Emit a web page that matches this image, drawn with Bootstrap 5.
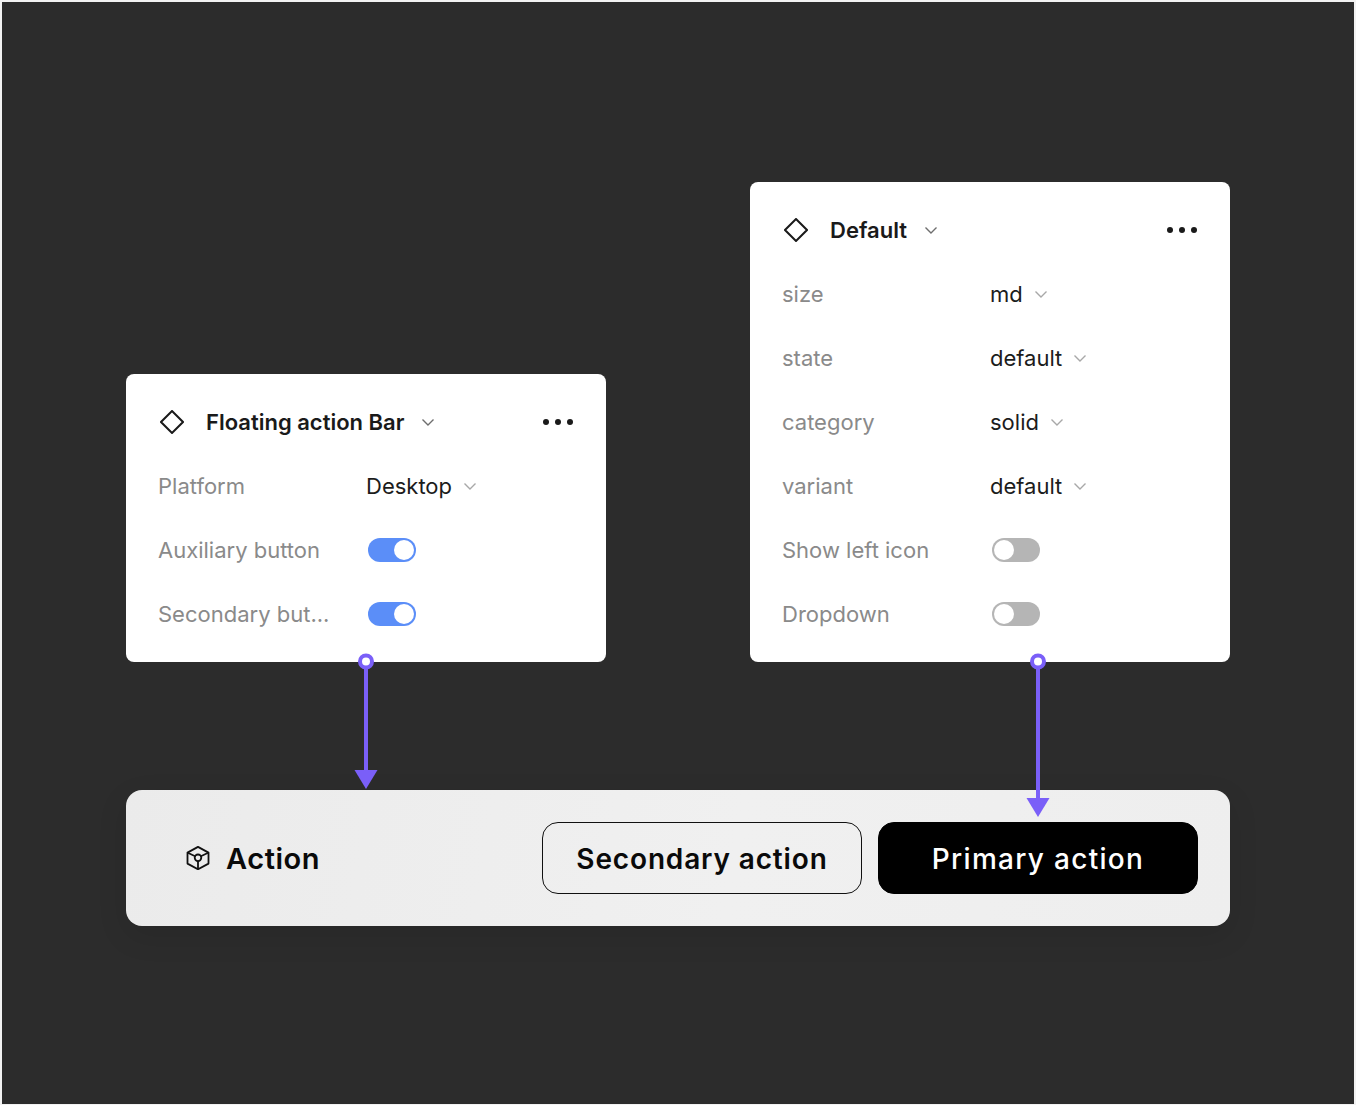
<!DOCTYPE html>
<html lang="en">
<head>
<meta charset="utf-8">
<title>Action bar properties</title>
<link href="https://cdn.jsdelivr.net/npm/bootstrap@5.3.0/dist/css/bootstrap.min.css" rel="stylesheet">
<style>
html,body{margin:0;background:#2c2c2c}
.stage{position:relative;width:1356px;height:1105px;background:#2c2c2c;border:2px solid #f2f2f2;border-bottom-width:1px;padding:180px 124px 0;font-family:Inter,"Liberation Sans",sans-serif;overflow:hidden}
.top-row{gap:144px}
.panel{width:480px;padding:16px 32px;background:#fff;border-radius:8px;font-size:22px;letter-spacing:0}
.prow{height:64px}
.plabel{width:208px;flex:none;color:#8a8a8a}
.pvalue{color:#1c1c1c}
.ptitle{color:#1a1a1a;font-weight:600;margin-left:22px;font-size:22px;letter-spacing:0}
.dia{margin-left:2px;flex:none}
.chev{flex:none;margin-left:10px}
.chev.ms-3{margin-left:16px}
.dots{margin-left:auto;margin-right:-1px;flex:none}
.tog{display:block;width:48px;height:24px;margin-left:2px;border-radius:12px;position:relative;background:#5b8ef8}
.tog::after{content:"";position:absolute;top:2px;right:2px;width:20px;height:20px;border-radius:50%;background:#fff}
.tog.off{background:#b5b5b5}
.tog.off::after{right:auto;left:2px}
.abar{width:1104px;height:136px;margin-top:128px;padding:32px;border-radius:16px;background:linear-gradient(100deg,#ebebeb,#f0f0f0 55%,#eeeeee);box-shadow:0 10px 30px rgba(0,0,0,.1)}
.astart{padding-left:28px;gap:16px;color:#0a0a0a;font-size:29px;font-weight:600;letter-spacing:.55px}
.astart span{padding-top:2px}
.abtn{width:320px;height:72px;border-radius:16px;font-family:Inter,sans-serif;font-size:28px;font-weight:600;letter-spacing:.85px;padding:2px 0 0;line-height:1}
.abtn.sec{border:1px solid #111;color:#0a0a0a;background:transparent}
.abtn.pri{border:1px solid #000;color:#fff;background:#000;font-weight:500;letter-spacing:1.3px}
.wires{position:absolute;left:-2px;top:-2px;pointer-events:none}
</style>
</head>
<body>
<div class="stage">
  <div class="d-flex align-items-end top-row">
    <section class="panel">
      <div class="prow d-flex align-items-center">
        <svg class="dia" width="24" height="24" viewBox="0 0 24 24"><path d="M12 1 23 12 12 23 1 12Z" fill="none" stroke="#1a1a1a" stroke-width="2"/></svg>
        <span class="ptitle">Floating action Bar</span>
        <svg class="chev ms-3" width="16" height="16" viewBox="0 0 16 16"><path d="M2.5 5.5l5.5 5.5 5.5-5.5" fill="none" stroke="#6e6e6e" stroke-width="1.4"/></svg>
        <svg class="dots" width="34" height="8" viewBox="0 0 34 8"><circle cx="5" cy="4" r="3" fill="#1a1a1a"/><circle cx="17" cy="4" r="3" fill="#1a1a1a"/><circle cx="29" cy="4" r="3" fill="#1a1a1a"/></svg>
      </div>
      <div class="prow d-flex align-items-center"><span class="plabel">Platform</span><span class="pvalue">Desktop</span><svg class="chev" width="16" height="16" viewBox="0 0 16 16"><path d="M2.5 5.5l5.5 5.5 5.5-5.5" fill="none" stroke="#a8a8a8" stroke-width="1.4"/></svg></div>
      <div class="prow d-flex align-items-center"><span class="plabel">Auxiliary button</span><span class="tog"></span></div>
      <div class="prow d-flex align-items-center"><span class="plabel">Secondary but...</span><span class="tog"></span></div>
    </section>
    <section class="panel">
      <div class="prow d-flex align-items-center">
        <svg class="dia" width="24" height="24" viewBox="0 0 24 24"><path d="M12 1 23 12 12 23 1 12Z" fill="none" stroke="#1a1a1a" stroke-width="2"/></svg>
        <span class="ptitle">Default</span>
        <svg class="chev ms-3" width="16" height="16" viewBox="0 0 16 16"><path d="M2.5 5.5l5.5 5.5 5.5-5.5" fill="none" stroke="#6e6e6e" stroke-width="1.4"/></svg>
        <svg class="dots" width="34" height="8" viewBox="0 0 34 8"><circle cx="5" cy="4" r="3" fill="#1a1a1a"/><circle cx="17" cy="4" r="3" fill="#1a1a1a"/><circle cx="29" cy="4" r="3" fill="#1a1a1a"/></svg>
      </div>
      <div class="prow d-flex align-items-center"><span class="plabel">size</span><span class="pvalue">md</span><svg class="chev" width="16" height="16" viewBox="0 0 16 16"><path d="M2.5 5.5l5.5 5.5 5.5-5.5" fill="none" stroke="#a8a8a8" stroke-width="1.4"/></svg></div>
      <div class="prow d-flex align-items-center"><span class="plabel">state</span><span class="pvalue">default</span><svg class="chev" width="16" height="16" viewBox="0 0 16 16"><path d="M2.5 5.5l5.5 5.5 5.5-5.5" fill="none" stroke="#a8a8a8" stroke-width="1.4"/></svg></div>
      <div class="prow d-flex align-items-center"><span class="plabel">category</span><span class="pvalue">solid</span><svg class="chev" width="16" height="16" viewBox="0 0 16 16"><path d="M2.5 5.5l5.5 5.5 5.5-5.5" fill="none" stroke="#a8a8a8" stroke-width="1.4"/></svg></div>
      <div class="prow d-flex align-items-center"><span class="plabel">variant</span><span class="pvalue">default</span><svg class="chev" width="16" height="16" viewBox="0 0 16 16"><path d="M2.5 5.5l5.5 5.5 5.5-5.5" fill="none" stroke="#a8a8a8" stroke-width="1.4"/></svg></div>
      <div class="prow d-flex align-items-center"><span class="plabel">Show left icon</span><span class="tog off"></span></div>
      <div class="prow d-flex align-items-center"><span class="plabel">Dropdown</span><span class="tog off"></span></div>
    </section>
  </div>
  <div class="abar d-flex align-items-center">
    <div class="astart d-flex align-items-center me-auto">
      <svg width="24" height="24" viewBox="0 0 24 24" fill="none" stroke="#111" stroke-width="1.8" stroke-linejoin="round"><path d="M12 .9 22.5 6.6v11L12 23.3 1.5 17.6v-11Z"/><circle cx="12" cy="11.8" r="3.3"/><path d="M12 15.1V23M9.1 10.2 1.8 6.8M14.9 10.2 22.2 6.8"/></svg>
      <span>Action</span>
    </div>
    <div class="d-flex gap-3">
      <button type="button" class="btn abtn sec">Secondary action</button>
      <button type="button" class="btn abtn pri">Primary action</button>
    </div>
  </div>
  <svg class="wires" width="1356" height="1105" viewBox="0 0 1356 1105">
    <g fill="#7a5ff8">
      <rect x="364" y="664" width="4" height="108"/>
      <path d="M354.5 770h23L366 789Z"/>
      <rect x="1036" y="664" width="4" height="136"/>
      <path d="M1026.5 798h23L1038 817Z"/>
    </g>
    <g fill="#fff" stroke="#7a5ff8" stroke-width="4">
      <circle cx="366" cy="661.5" r="6"/>
      <circle cx="1038" cy="661.5" r="6"/>
    </g>
  </svg>
</div>
<script src="https://cdn.jsdelivr.net/npm/bootstrap@5.3.0/dist/js/bootstrap.bundle.min.js"></script>
</body>
</html>
